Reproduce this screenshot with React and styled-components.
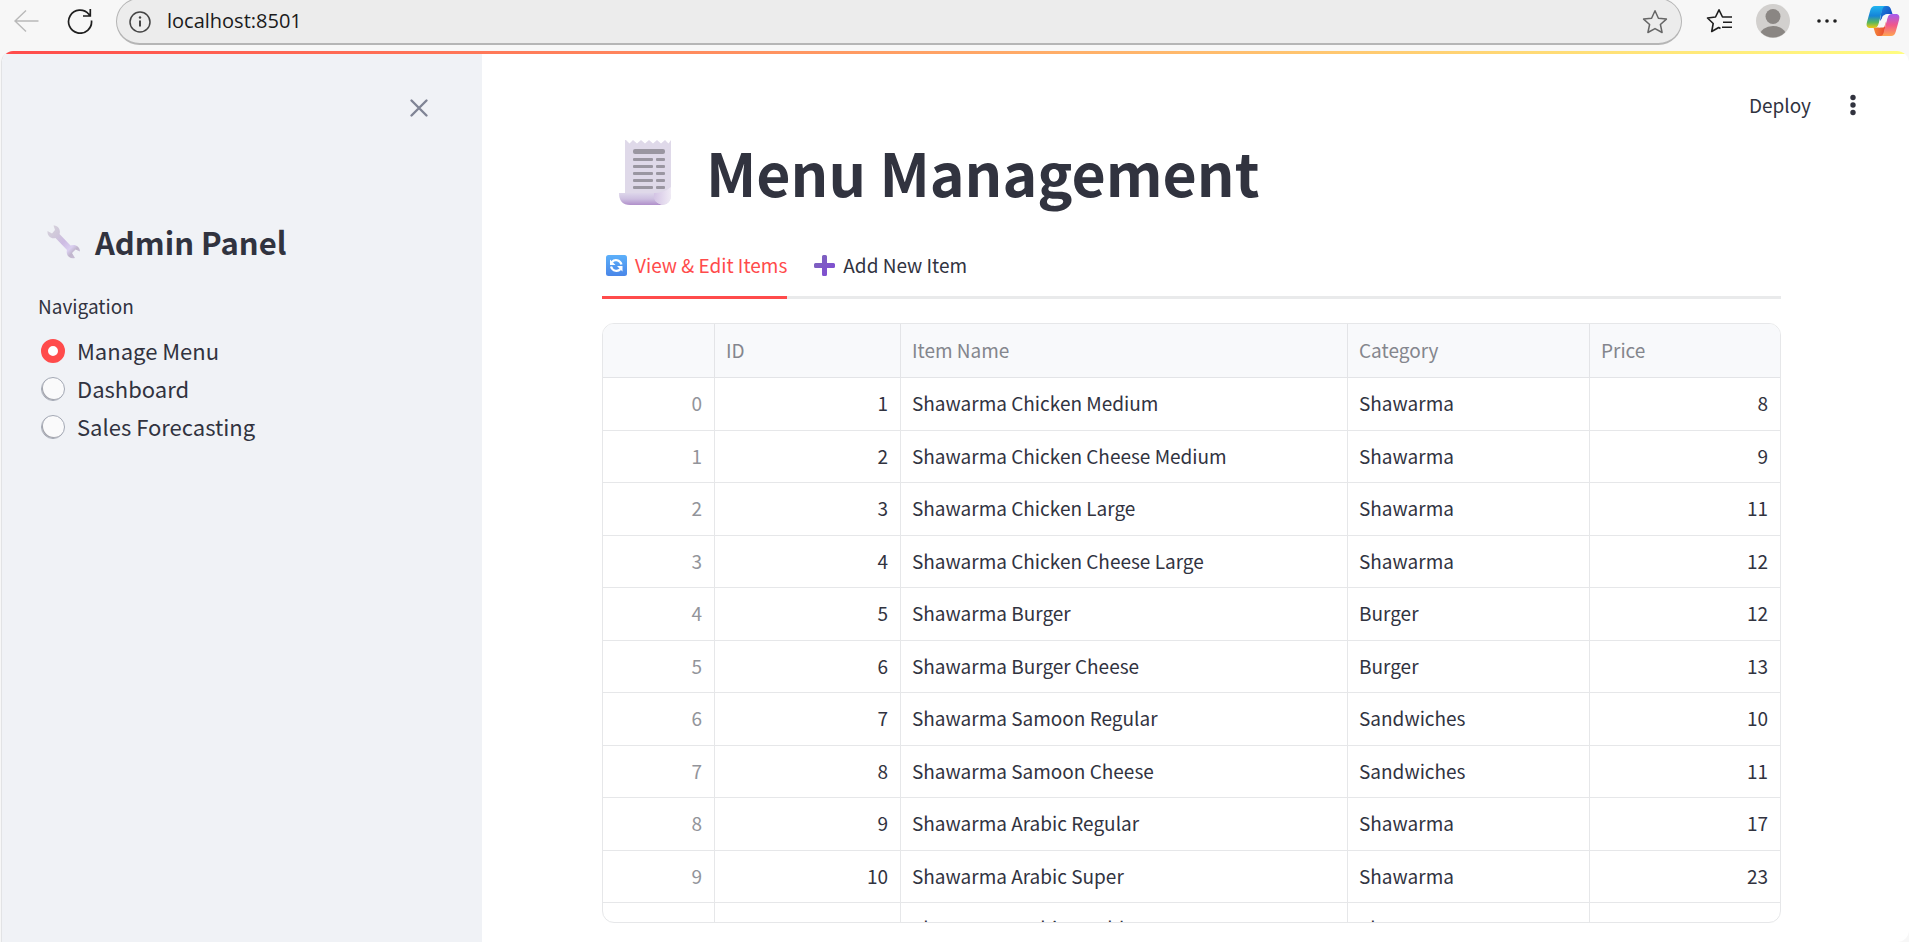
import React, { useState } from "react";
import styled, { createGlobalStyle } from "styled-components";

const sans = `"Noto Sans CJK SC", "Noto Sans", sans-serif`;
const ink = "#31333f";
const accent = "#ff4b4b";

const Global = createGlobalStyle`
  *, *::before, *::after { box-sizing: border-box; }
  body { margin: 0; background: #f7f7f7; font-family: ${sans}; color: ${ink}; }
  button, input { font: inherit; color: inherit; }
`;

const Page = styled.div`
  min-height: 100vh;
  display: flex;
  flex-direction: column;
  overflow: hidden;
`;

const BrowserBar = styled.header`
  height: 51px;
  flex: none;
  display: flex;
  align-items: flex-start;
  padding: 0 7px 0 12px;
  background: #f7f7f7;
`;

const IconButton = styled.button`
  display: flex;
  align-items: center;
  justify-content: center;
  flex: none;
  width: ${(p) => p.$w || 28}px;
  height: ${(p) => p.$h || 42}px;
  padding: 0;
  border: 0;
  background: none;
  color: ${(p) => p.$color || "#1f1f1f"};
`;

const BackGroup = styled.div`
  display: flex;
  gap: 26px;
  margin-right: 22px;
`;

const AddressBar = styled.div`
  flex: 1;
  min-width: 0;
  height: 47px;
  margin-top: -2px;
  padding: 2px 12px 0 10px;
  display: flex;
  align-items: center;
  gap: 14px;
  border: 1px solid #b5b5b5;
  border-bottom-width: 2px;
  border-radius: 24px;
  background: #ececec;
`;

const UrlInput = styled.input`
  flex: 1;
  min-width: 0;
  padding: 0 0 2px;
  border: 0;
  outline: 0;
  background: none;
  font-family: "Open Sans", sans-serif;
  font-size: 20px;
  line-height: 28px;
  color: #1b1b1b;
`;

const Tools = styled.div`
  display: flex;
  align-items: center;
  gap: 20px;
  margin-left: 20px;
`;

const AppFrame = styled.div`
  flex: 1;
  min-height: 0;
  margin-left: 1px;
  display: flex;
  flex-direction: column;
  border-left: 1px solid #e2e3e5;
  border-radius: 12px 12px 12px 0;
  background: #fff;
  overflow: hidden;
`;

const Decoration = styled.div`
  height: 3px;
  flex: none;
  background: linear-gradient(90deg, #ff4b4b, #fffd80);
`;

const Body = styled.div`
  flex: 1;
  display: flex;
`;

const Sidebar = styled.aside`
  width: 480px;
  flex: none;
  padding: 33px 36px 0;
  background: #f0f2f6;
`;

const SidebarTop = styled.div`
  display: flex;
  justify-content: flex-end;
  padding-right: 11px;
`;

const SidebarTitle = styled.h2`
  display: flex;
  align-items: center;
  gap: 12px;
  margin: 91px 0 28px;
  padding-left: 7px;
  font-size: 31px;
  line-height: 44px;
  font-weight: 600;
`;

const RadioGroup = styled.fieldset`
  margin: 0;
  padding: 0;
  border: 0;
`;

const Legend = styled.legend`
  padding: 0;
  margin-bottom: 12px;
  font-size: 19px;
  line-height: 28px;
`;

const RadioLabel = styled.label`
  display: flex;
  align-items: center;
  gap: 12px;
  height: 38px;
  padding-left: 3px;
  font-size: 22px;
  line-height: 32px;
`;

const RadioText = styled.span`
  padding-bottom: 2px;
`;

const Radio = styled.input`
  appearance: none;
  flex: none;
  width: 24px;
  height: 24px;
  margin: 0;
  border: 1px solid #a3a8b4;
  border-radius: 50%;
  background: #fafafb;
  box-shadow: inset 1px -1px 0 #a3a4ac;
  &:checked {
    border: 7px solid ${accent};
    background: #fff;
    box-shadow: none;
  }
`;

const Main = styled.main`
  flex: 1;
  min-width: 0;
  display: flex;
  flex-direction: column;
`;

const Toolbar = styled.div`
  display: flex;
  justify-content: flex-end;
  align-items: center;
  gap: 28px;
  height: 66px;
  padding: 36px 42px 0 0;
`;

const DeployButton = styled.button`
  padding: 0;
  border: 0;
  background: none;
  font-size: 19px;
  line-height: 28px;
`;

const Content = styled.div`
  padding: 8px 128px 19px 120px;
`;

const Title = styled.h1`
  display: flex;
  align-items: center;
  gap: 28px;
  margin: 0;
  padding-left: 16px;
  font-size: 59px;
  line-height: 88px;
  font-weight: 700;
`;

const Tabs = styled.div`
  display: flex;
  gap: 23px;
  height: 60px;
  margin: 23px 0 24px;
  border-bottom: 3px solid #e9eaeb;
`;

const Tab = styled.button`
  display: flex;
  align-items: center;
  gap: 8px;
  height: 60px;
  padding: 0 0 5px 4px;
  border: 0;
  border-bottom: 3px solid ${(p) => (p.$active ? accent : "transparent")};
  background: none;
  color: ${(p) => (p.$active ? accent : ink)};
  font-size: 19px;
  line-height: 28px;
`;

const TableFrame = styled.div`
  height: 600px;
  overflow: hidden;
  border: 1px solid #e6e7e9;
  border-radius: 12px;
`;

const Table = styled.table`
  width: 100%;
  table-layout: fixed;
  border-collapse: separate;
  border-spacing: 0;
  font-size: 19px;
  line-height: 28px;
`;

const Col = styled.col`
  width: ${(p) => p.$share};
`;

const HeadCell = styled.th`
  height: 54px;
  padding: 0 11px 2px;
  text-align: left;
  font-weight: 400;
  color: #84868d;
  background: #f8f9fb;
  border-bottom: 1px solid #e3e4e7;
  border-right: 1px solid #e3e4e7;
  &:last-child { border-right: 0; }
`;

const Row = styled.tr`
  height: 53px;
  &:nth-child(even) { height: 52px; }
`;

const Cell = styled.td`
  padding: 0 12px 2px 11px;
  text-align: ${(p) => (p.$num ? "right" : "left")};
  color: ${(p) => (p.$muted ? "#92949a" : ink)};
  border-bottom: 1px solid #e6e7e9;
  border-right: 1px solid #e6e7e9;
  white-space: nowrap;
  &:last-child { border-right: 0; }
`;

const items = [
  [1, "Shawarma Chicken Medium", "Shawarma", 8],
  [2, "Shawarma Chicken Cheese Medium", "Shawarma", 9],
  [3, "Shawarma Chicken Large", "Shawarma", 11],
  [4, "Shawarma Chicken Cheese Large", "Shawarma", 12],
  [5, "Shawarma Burger", "Burger", 12],
  [6, "Shawarma Burger Cheese", "Burger", 13],
  [7, "Shawarma Samoon Regular", "Sandwiches", 10],
  [8, "Shawarma Samoon Cheese", "Sandwiches", 11],
  [9, "Shawarma Arabic Regular", "Shawarma", 17],
  [10, "Shawarma Arabic Super", "Shawarma", 23],
  [11, "Shawarma Arabic Double", "Shawarma", 28],
];

const BackIcon = () => (
  <svg width="26" height="24" viewBox="0 0 26 24" fill="none" stroke="currentColor" strokeWidth="1.4">
    <path d="M25.5 12H2M13 1.500L2 12l11 10.500" />
  </svg>
);

const ReloadIcon = () => (
  <svg width="26" height="26" viewBox="0 0 26 26" fill="none" stroke="currentColor" strokeWidth="1.700">
    <path d="M24.500 12.500A11.500 11.500 0 1 1 21.800 6.200L23 7.600M23.300 1v7H16" />
  </svg>
);

const InfoIcon = () => (
  <svg width="22" height="22" viewBox="0 0 22 22" fill="none" stroke="currentColor" strokeWidth="1.500">
    <circle cx="11" cy="11" r="10" />
    <path d="M11 9.500v6" strokeWidth="2" />
    <circle cx="11" cy="6.500" r="1.200" fill="currentColor" stroke="none" />
  </svg>
);

const StarIcon = () => (
  <svg width="26" height="26" viewBox="0 0 26 26" fill="none" stroke="currentColor" strokeWidth="1.500" strokeLinejoin="round">
    <path d="M13 1.800l3.400 7.400 8 .9-6 5.400 1.700 8L13 19.600l-7.100 3.900 1.700-8-6-5.400 8-.9z" />
  </svg>
);

const FavoritesIcon = () => (
  <svg width="26" height="26" viewBox="0 0 26 26" fill="none" stroke="currentColor" strokeWidth="1.600" strokeLinejoin="round">
    <path d="M14.500 20.500l-1.800-1-7 4 1.500-8-5.700-5.500 8-1L13 1.800l3.500 7.200H26M17 14.300h9M16 19.300h10" />
  </svg>
);

const Avatar = () => (
  <svg width="34" height="34" viewBox="0 0 34 34">
    <defs><clipPath id="avatar"><circle cx="17" cy="17" r="16.500" /></clipPath></defs>
    <circle cx="17" cy="17" r="17" fill="#d2d0ce" />
    <g clipPath="url(#avatar)" fill="#8a8683">
      <circle cx="17" cy="12.500" r="7.500" />
      <ellipse cx="17" cy="31" rx="13" ry="9" />
    </g>
  </svg>
);

const DotsIcon = ({ vertical }) =>
  vertical ? (
    <svg width="6" height="22" viewBox="0 0 6 22" fill={ink}>
      <circle cx="3" cy="3.500" r="2.700" /><circle cx="3" cy="11" r="2.700" /><circle cx="3" cy="18.500" r="2.700" />
    </svg>
  ) : (
    <svg width="20" height="4" viewBox="0 0 20 4" fill="currentColor">
      <circle cx="2" cy="2" r="1.800" /><circle cx="10" cy="2" r="1.800" /><circle cx="18" cy="2" r="1.800" />
    </svg>
  );

const CopilotIcon = () => (
  <svg width="34" height="32" viewBox="0 0 34 32">
    <defs>
      <linearGradient id="cpA" x1="0" y1="0" x2="0" y2="1">
        <stop offset="0" stopColor="#22b5f0" /><stop offset=".45" stopColor="#1584d8" /><stop offset=".75" stopColor="#5cb85c" /><stop offset="1" stopColor="#f2c811" />
      </linearGradient>
      <linearGradient id="cpB" x1="0" y1="0" x2="0" y2="1">
        <stop offset="0" stopColor="#a45cf0" /><stop offset=".5" stopColor="#f0568c" /><stop offset="1" stopColor="#ffa552" />
      </linearGradient>
      <linearGradient id="cpC" x1="0" y1="0" x2="1" y2="1">
        <stop offset="0" stopColor="#1b8be0" /><stop offset="1" stopColor="#1434b8" />
      </linearGradient>
      <linearGradient id="cpD" x1="0" y1="0" x2="1" y2="0">
        <stop offset="0" stopColor="#f58a3c" /><stop offset="1" stopColor="#e8452f" />
      </linearGradient>
    </defs>
    <path d="M16 1h5c2.500 0 3.200 1.200 4 3.600L26.500 9H21c-2 0-3 1-3.500 3L14 16z" fill="url(#cpC)" />
    <path d="M18 31h-5c-2.500 0-3.200-1.200-4-3.600L7.500 22.500H13c2 0 3-1 3.500-3L20 16z" fill="url(#cpD)" />
    <path d="M9 1h11c-2 0-3 1.300-3.600 3.300L12.500 19c-.8 2.700-2 4-4.500 4H4.200C.8 23 0 20.500 1 17L4.200 5.500C5 2.500 6.500 1 9 1z" fill="url(#cpA)" />
    <path d="M25 31H14c2 0 3-1.300 3.600-3.300L21.500 13c.8-2.700 2-4 4.500-4h3.800c3.400 0 4.200 2.500 3.200 6l-3.200 11.500C29 29.500 27.500 31 25 31z" fill="url(#cpB)" />
    <path d="M19.500 10H22l-3.500 11.500c-.3.700-.8 1-1.500 1h-4.500c.6-.6 1-1.200 1.300-2.200l2.400-8c.5-1.500 1.500-2.300 3.300-2.300z" fill="#f7f7f7" />
  </svg>
);

const CloseIcon = () => (
  <svg width="20" height="20" viewBox="0 0 20 20" fill="none" stroke="currentColor" strokeWidth="2.400" strokeLinecap="round">
    <path d="M2.500 2.500l15 15M17.500 2.500l-15 15" />
  </svg>
);

const WrenchIcon = () => (
  <svg width="38" height="36" viewBox="0 0 38 36">
    <defs>
      <linearGradient id="wr" x1="0" y1="0" x2="1" y2="1">
        <stop offset="0" stopColor="#d8d5dc" /><stop offset=".3" stopColor="#cfc6da" /><stop offset=".5" stopColor="#cdbbe3" /><stop offset=".7" stopColor="#dacff0" /><stop offset=".8" stopColor="#c0b5cc" /><stop offset="1" stopColor="#cfc4dc" />
      </linearGradient>
    </defs>
    <path d="M8.500 1.500C13 1.500 16 5.500 14.500 10L25.500 21.500c4.500-1.700 9.500 1 9.500 6l-4.500-2-3.500 3.500 3 5C24.500 35.500 20.500 31 22 26L10.500 14C6.500 15.500 2 12 2.500 7l4.500 2.500L10 6z" fill="url(#wr)" />
  </svg>
);

const ReceiptIcon = () => (
  <svg width="60" height="66" viewBox="0 0 60 66">
    <defs>
      <linearGradient id="rcRoll" x1="0" y1="0" x2="0" y2="1">
        <stop offset="0" stopColor="#ddd6ea" /><stop offset=".5" stopColor="#cdbfe0" /><stop offset="1" stopColor="#b08fca" />
      </linearGradient>
      <linearGradient id="rcCurl" x1="0" y1="0" x2="1" y2="0">
        <stop offset="0" stopColor="#d3c3e4" /><stop offset="1" stopColor="#f0ebf5" />
      </linearGradient>
    </defs>
    <path d="M7 1h1l3.500 3.500L15 1l4 3.500L23 1l4 3.500L31 1l4 3.500L39 1l4 3.500L47 1l3.500 3.500L53 1v54q0 11-9 11H20L7 56z" fill="#dfd9e9" />
    <path d="M1 54h36q-3 9 8 12H12Q1 66 1 54z" fill="url(#rcRoll)" />
    <path d="M36 54q10 0 17-6v7q0 11-9 11-10-3-8-12z" fill="url(#rcCurl)" />
    <g fill="#9a96a1">
      <rect x="15" y="10" width="32" height="5" rx="2" />
      {[19, 26, 33, 40, 47].map((y) => (
        <React.Fragment key={y}>
          <rect x="15" y={y} width="20" height="3" rx="1" />
          <rect x="38" y={y} width="9" height="3" rx="1" />
        </React.Fragment>
      ))}
    </g>
  </svg>
);

const RefreshEmoji = () => (
  <svg width="21" height="21" viewBox="0 0 21 21">
    <defs><linearGradient id="rf" x1="0" y1="0" x2="0" y2="1"><stop offset="0" stopColor="#5cb0fa" /><stop offset="1" stopColor="#4a86e8" /></linearGradient></defs>
    <rect width="21" height="21" rx="2.500" fill="url(#rf)" />
    <g fill="none" stroke="#fff" strokeWidth="2.200">
      <path d="M6 7C8.500 4 14 4.500 15.500 9.500" /><path d="M14.500 14C12 17 6.500 16.500 5 11.500" />
    </g>
    <path d="M4 4.500v5.500h5.500zM16.500 16.500V11H11z" fill="#fff" />
  </svg>
);

const PlusEmoji = () => (
  <svg width="21" height="21" viewBox="0 0 21 21">
    <defs><linearGradient id="pl" x1="0" y1="0" x2="1" y2="1"><stop offset="0" stopColor="#7d68b8" /><stop offset="1" stopColor="#8048d8" /></linearGradient></defs>
    <path d="M9.500 0h2Q13 0 13 1.500V8h6.500Q21 8 21 9.500v2q0 1.500-1.500 1.500H13v6.500q0 1.500-1.500 1.500h-2Q8 21 8 19.500V13H1.500Q0 13 0 11.500v-2Q0 8 1.500 8H8V1.500Q8 0 9.500 0z" fill="url(#pl)" />
  </svg>
);

const pages = ["Manage Menu", "Dashboard", "Sales Forecasting"];

export default function App() {
  const [page, setPage] = useState(pages[0]);
  const [tab, setTab] = useState(0);
  return (
    <Page>
      <Global />
      <BrowserBar>
        <BackGroup>
          <IconButton aria-label="Back" $color="#b9b9b9"><BackIcon /></IconButton>
          <IconButton aria-label="Refresh"><ReloadIcon /></IconButton>
        </BackGroup>
        <AddressBar>
          <IconButton aria-label="Site information" $w={26} $color="#444"><InfoIcon /></IconButton>
          <UrlInput aria-label="Address" defaultValue="localhost:8501" />
          <IconButton aria-label="Add to favorites" $color="#666"><StarIcon /></IconButton>
        </AddressBar>
        <Tools>
          <IconButton aria-label="Favorites" $w={34}><FavoritesIcon /></IconButton>
          <IconButton aria-label="Profile" $w={34}><Avatar /></IconButton>
          <IconButton aria-label="Settings and more" $w={34}><DotsIcon /></IconButton>
          <IconButton aria-label="Copilot" $w={38}><CopilotIcon /></IconButton>
        </Tools>
      </BrowserBar>
      <AppFrame>
        <Decoration />
        <Body>
          <Sidebar>
            <SidebarTop>
              <IconButton aria-label="Close sidebar" $w={32} $h={42} $color="#808495"><CloseIcon /></IconButton>
            </SidebarTop>
            <SidebarTitle><WrenchIcon />Admin Panel</SidebarTitle>
            <RadioGroup>
              <Legend>Navigation</Legend>
              {pages.map((name) => (
                <RadioLabel key={name}>
                  <Radio type="radio" name="page" checked={page === name} onChange={() => setPage(name)} />
                  <RadioText>{name}</RadioText>
                </RadioLabel>
              ))}
            </RadioGroup>
          </Sidebar>
          <Main>
            <Toolbar>
              <DeployButton>Deploy</DeployButton>
              <IconButton aria-label="Main menu" $h={28}><DotsIcon vertical /></IconButton>
            </Toolbar>
            <Content>
              <Title><ReceiptIcon />Menu Management</Title>
              <Tabs role="tablist">
                <Tab role="tab" aria-selected={tab === 0} $active={tab === 0} onClick={() => setTab(0)}><RefreshEmoji />View &amp; Edit Items</Tab>
                <Tab role="tab" aria-selected={tab === 1} $active={tab === 1} onClick={() => setTab(1)}><PlusEmoji />Add New Item</Tab>
              </Tabs>
              <TableFrame>
                <Table>
                  <colgroup>
                    <Col $share="112px" /><Col $share="186px" /><Col $share="auto" /><Col $share="242px" /><Col $share="190px" />
                  </colgroup>
                  <thead>
                    <tr>
                      <HeadCell aria-label="Index" />
                      <HeadCell>ID</HeadCell><HeadCell>Item Name</HeadCell><HeadCell>Category</HeadCell><HeadCell>Price</HeadCell>
                    </tr>
                  </thead>
                  <tbody>
                    {items.map(([id, name, category, price], i) => (
                      <Row key={id}>
                        <Cell $num $muted>{i}</Cell>
                        <Cell $num>{id}</Cell>
                        <Cell>{name}</Cell>
                        <Cell>{category}</Cell>
                        <Cell $num>{price}</Cell>
                      </Row>
                    ))}
                  </tbody>
                </Table>
              </TableFrame>
            </Content>
          </Main>
        </Body>
      </AppFrame>
    </Page>
  );
}
